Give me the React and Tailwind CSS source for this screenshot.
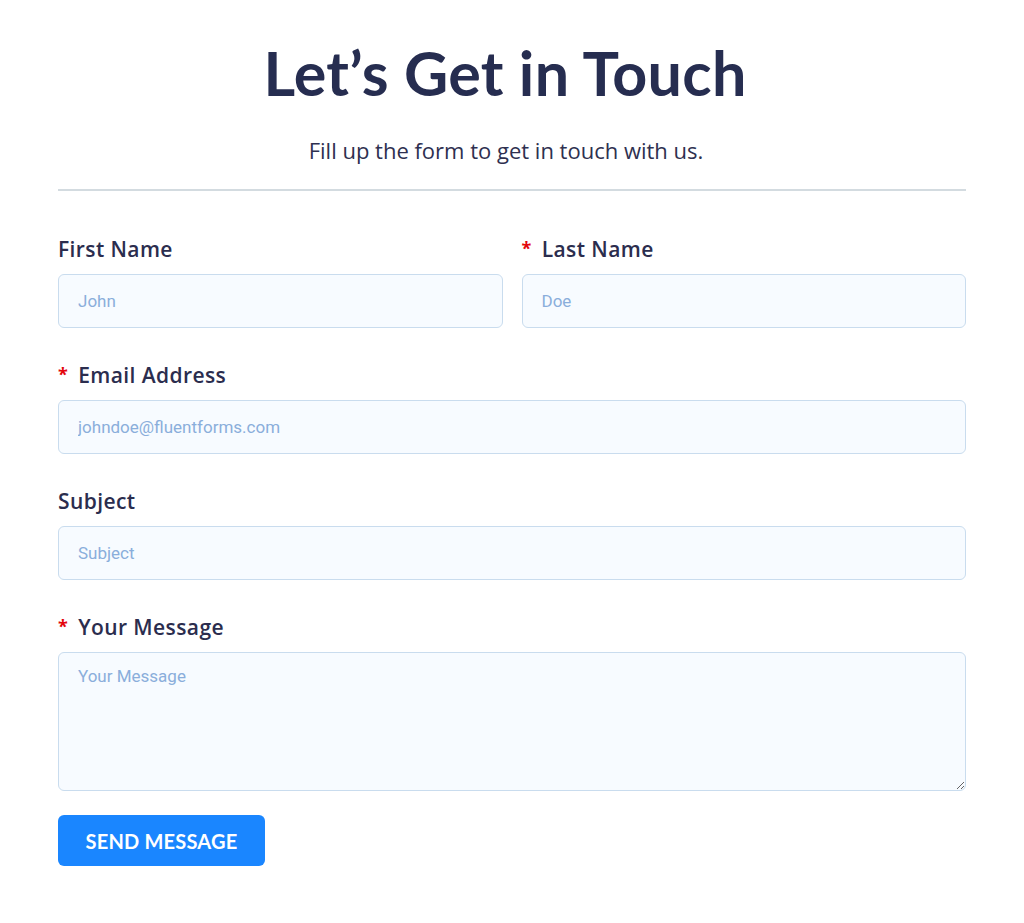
const labelCls =
  "flex items-center text-[21px] leading-6 font-semibold text-[#2b2d4e] mb-[13px] tracking-[0.4px]";
const inputCls =
  "block w-full h-[54px] px-[19px] rounded-[6px] border border-[#c9dcee] bg-[#f7fbff] text-[17px] text-[#2b2d4e] placeholder:text-[#8aaedb] outline-none";

const labelFont = { fontFamily: "'Open Sans', 'Noto Sans', sans-serif" };
const fieldFont = { fontFamily: "Roboto, 'Liberation Sans', sans-serif" };

function Req() {
  return <span className="text-[#e3060c] text-[18px] font-bold mr-[10px] -mt-[3px]">*</span>;
}

export default function App() {
  return (
    <div
      className="min-h-screen bg-white px-[58px] pt-[40px]"
      style={{ fontFamily: "Lato, 'Noto Sans', sans-serif" }}
    >
      <h1 className="text-center text-[61px] leading-[66px] font-bold text-[#262d50] tracking-[0.3px] pr-[14px]">
        Let’s Get in Touch
      </h1>
      <p
        className="text-center text-[22px] leading-7 text-[#2e3050] mt-[30px] pr-[12px]"
        style={labelFont}
      >
        Fill up the form to get in touch with us.
      </p>
      <div className="h-[2px] bg-[#d3dbe0] mt-[25px]" />

      <form className="pt-[46px]" style={labelFont}>
        <div className="grid grid-cols-2 gap-[19px]">
          <div>
            <label className={labelCls}>First Name</label>
            <input className={inputCls} placeholder="John" style={fieldFont} />
          </div>
          <div>
            <label className={labelCls}>
              <Req />
              Last Name
            </label>
            <input className={inputCls} placeholder="Doe" style={fieldFont} />
          </div>
        </div>

        <div className="mt-[35px]">
          <label className={labelCls}>
            <Req />
            Email Address
          </label>
          <input className={inputCls} placeholder="johndoe@fluentforms.com" style={fieldFont} />
        </div>

        <div className="mt-[35px]">
          <label className={labelCls}>Subject</label>
          <input className={inputCls} placeholder="Subject" style={fieldFont} />
        </div>

        <div className="mt-[35px]">
          <label className={labelCls}>
            <Req />
            Your Message
          </label>
          <textarea
            className="block w-full h-[139px] px-[19px] py-[11px] rounded-[6px] border border-[#c9dcee] bg-[#f7fbff] text-[17px] text-[#2b2d4e] placeholder:text-[#8aaedb] outline-none"
            placeholder="Your Message"
            style={fieldFont}
          />
        </div>

        <button
          type="button"
          className="mt-[24px] h-[51px] w-[207px] rounded-[6px] bg-[#1a86ff] text-white text-[20px] font-bold tracking-[0.2px]"
          style={{ fontFamily: "Lato, sans-serif" }}
        >
          SEND MESSAGE
        </button>
      </form>
    </div>
  );
}
